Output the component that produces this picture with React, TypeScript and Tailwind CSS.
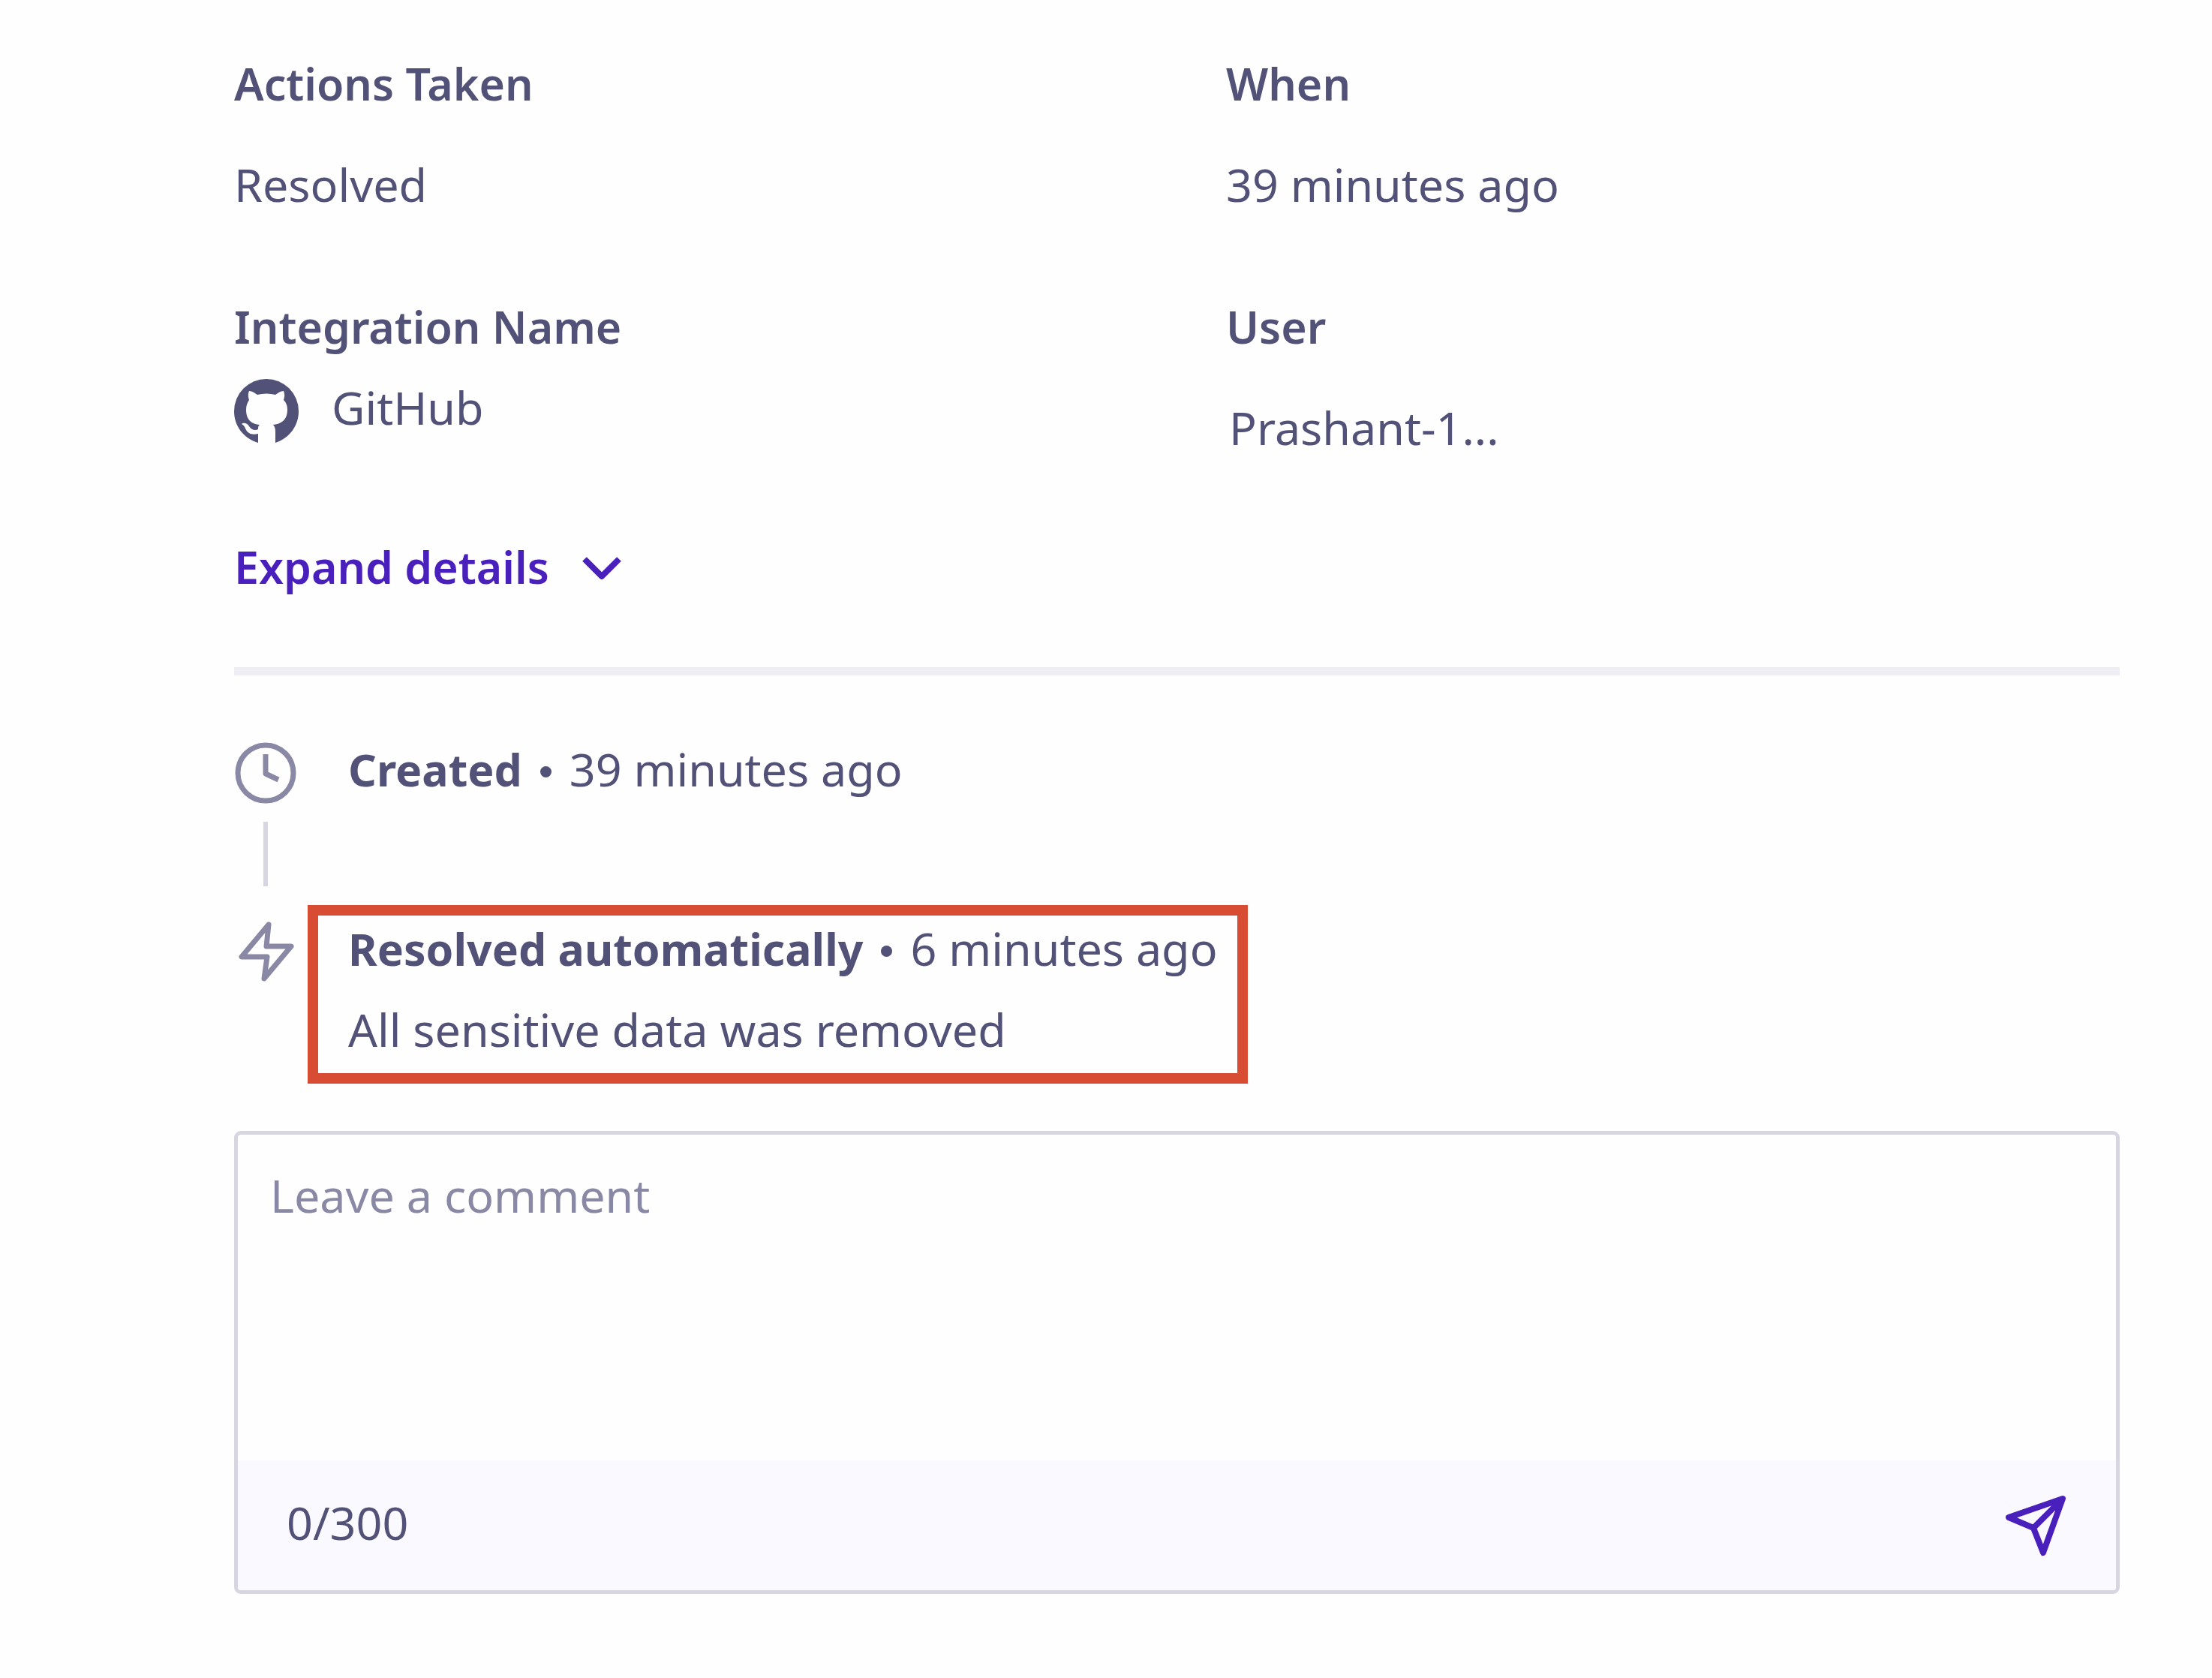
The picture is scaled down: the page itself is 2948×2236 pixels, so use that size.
import { useState } from "react";
import type { ReactNode } from "react";

function GitHubIcon() {
  return (
    <svg viewBox="0 0 86 86" className="size-[86px] shrink-0 fill-[#525177]" aria-hidden="true">
      <path d="M43 0A43 43 0 0 0 0 43C0 62 12 79 32 85V73C24 75 18 73 15 66 14 63 12 61 10 60 12 58 17 58 20 63 23 68 28 69 32 67 32 64 32 63 34 61 24 60 16 55 16 41 16 35 18 31 20 28 19 25 18 21 20 16 24 16 28 19 31 21 39 19 47 19 55 21 58 19 62 16 66 16 68 21 67 25 66 28 69 31 71 35 71 41 71 55 62 60 52 61 54 63 55 66 55 70V85C74 79 86 62 86 43A43 43 0 0 0 43 0Z" />
    </svg>
  );
}

function ClockIcon() {
  return (
    <svg viewBox="0 0 84 84" className="size-[84px] fill-none stroke-[#8988a5]" strokeWidth="7" strokeLinejoin="round" aria-hidden="true">
      <circle cx="42" cy="42" r="37" />
      <path d="M42 17v26l17 8" />
    </svg>
  );
}

function BoltIcon() {
  return (
    <svg viewBox="0 0 84 84" className="size-[84px] fill-none stroke-[#8988a5]" strokeWidth="7" strokeLinejoin="round" aria-hidden="true">
      <path d="M46 6 10 49h34l-4 29 36-43H43z" />
    </svg>
  );
}

function SendIcon() {
  return (
    <svg viewBox="0 0 84 84" className="size-[84px] fill-none stroke-[#4a20bd]" strokeWidth="8" strokeLinejoin="round" aria-hidden="true">
      <path d="M78 6 6 31l33 14 13 33zM39 45 78 6" />
    </svg>
  );
}

function Field({ name, children }: { name: string; children: ReactNode }) {
  return (
    <div>
      <dt className="text-[59px] leading-[108px] font-semibold">{name}</dt>
      {children}
    </div>
  );
}

function Entry({ title, when }: { title: string; when: string }) {
  return (
    <p className="flex h-[108px] items-center">
      <strong className="text-[59px] font-bold">{title}</strong>
      <span className="mx-[24px] mt-[6px] size-[15px] rounded-full bg-[#525177]" />
      <span>{when}</span>
    </p>
  );
}

export default function App() {
  const [comment, setComment] = useState("");

  return (
    <main className="min-h-screen bg-[#fefefe] pt-[57px] pr-[123px] pb-[108px] pl-[312px] font-['Noto_Sans',sans-serif] text-[61px] leading-[108px] text-[#525177]">
      <dl className="grid grid-cols-2 gap-x-[131px] gap-y-[81px]">
        <Field name="Actions Taken">
          <dd className="mt-[27px]">Resolved</dd>
        </Field>
        <Field name="When">
          <dd className="mt-[27px]">39 minutes ago</dd>
        </Field>
        <Field name="Integration Name">
          <dd className="flex gap-[44px]">
            <span className="flex pt-[16px]">
              <GitHubIcon />
            </span>
            GitHub
          </dd>
        </Field>
        <Field name="User">
          <dd className="mt-[27px] pl-[4px]">Prashant-1...</dd>
        </Field>
      </dl>

      <button type="button" className="mt-[77px] flex items-center gap-[44px] text-[59px] leading-[108px] font-semibold text-[#4a20bd]">
        Expand details
        <svg viewBox="0 0 52 32" className="mt-[4px] h-[32px] w-[52px] fill-none stroke-current" strokeWidth="8" strokeLinejoin="round" aria-hidden="true">
          <path d="m3 4 23 23L49 4" />
        </svg>
      </button>

      <hr className="mt-[80px] h-[11px] border-0 bg-[#efeef4]" />

      <ol className="mt-[71px]">
        <li className="flex items-start gap-[68px]">
          <div className="flex w-[84px] flex-col items-center pt-[17px]">
            <ClockIcon />
            <span className="mt-[23px] h-[86px] w-[6px] bg-[#d7d6e0]" />
          </div>
          <Entry title="Created" when="39 minutes ago" />
        </li>
        <li className="mt-[29px] flex items-start gap-[68px]">
          <div className="flex w-[84px] pt-[16px]">
            <BoltIcon />
          </div>
          <div className="relative">
            <Entry title="Resolved automatically" when="6 minutes ago" />
            <p>All sensitive data was removed</p>
            <div className="pointer-events-none absolute -top-[4px] -right-[40px] -bottom-[18px] -left-[54px] border-[14px] border-[#d84c33]" />
          </div>
        </li>
      </ol>

      <form
        className="mt-[81px] overflow-hidden rounded-[9px] border-[5px] border-[#d7d6e0]"
        onSubmit={(event) => event.preventDefault()}
      >
        <textarea
          aria-label="Leave a comment"
          placeholder="Leave a comment"
          maxLength={300}
          value={comment}
          onChange={(event) => setComment(event.target.value)}
          className="block h-[434px] w-full resize-none px-[43px] py-[27px] outline-none placeholder:text-[#8988a5]"
        />
        <div className="flex h-[173px] items-center justify-between bg-[#faf9ff] px-[65px]">
          <span className="pb-[8px]">{comment.length}/300</span>
          <button type="submit" aria-label="Send comment">
            <SendIcon />
          </button>
        </div>
      </form>
    </main>
  );
}
